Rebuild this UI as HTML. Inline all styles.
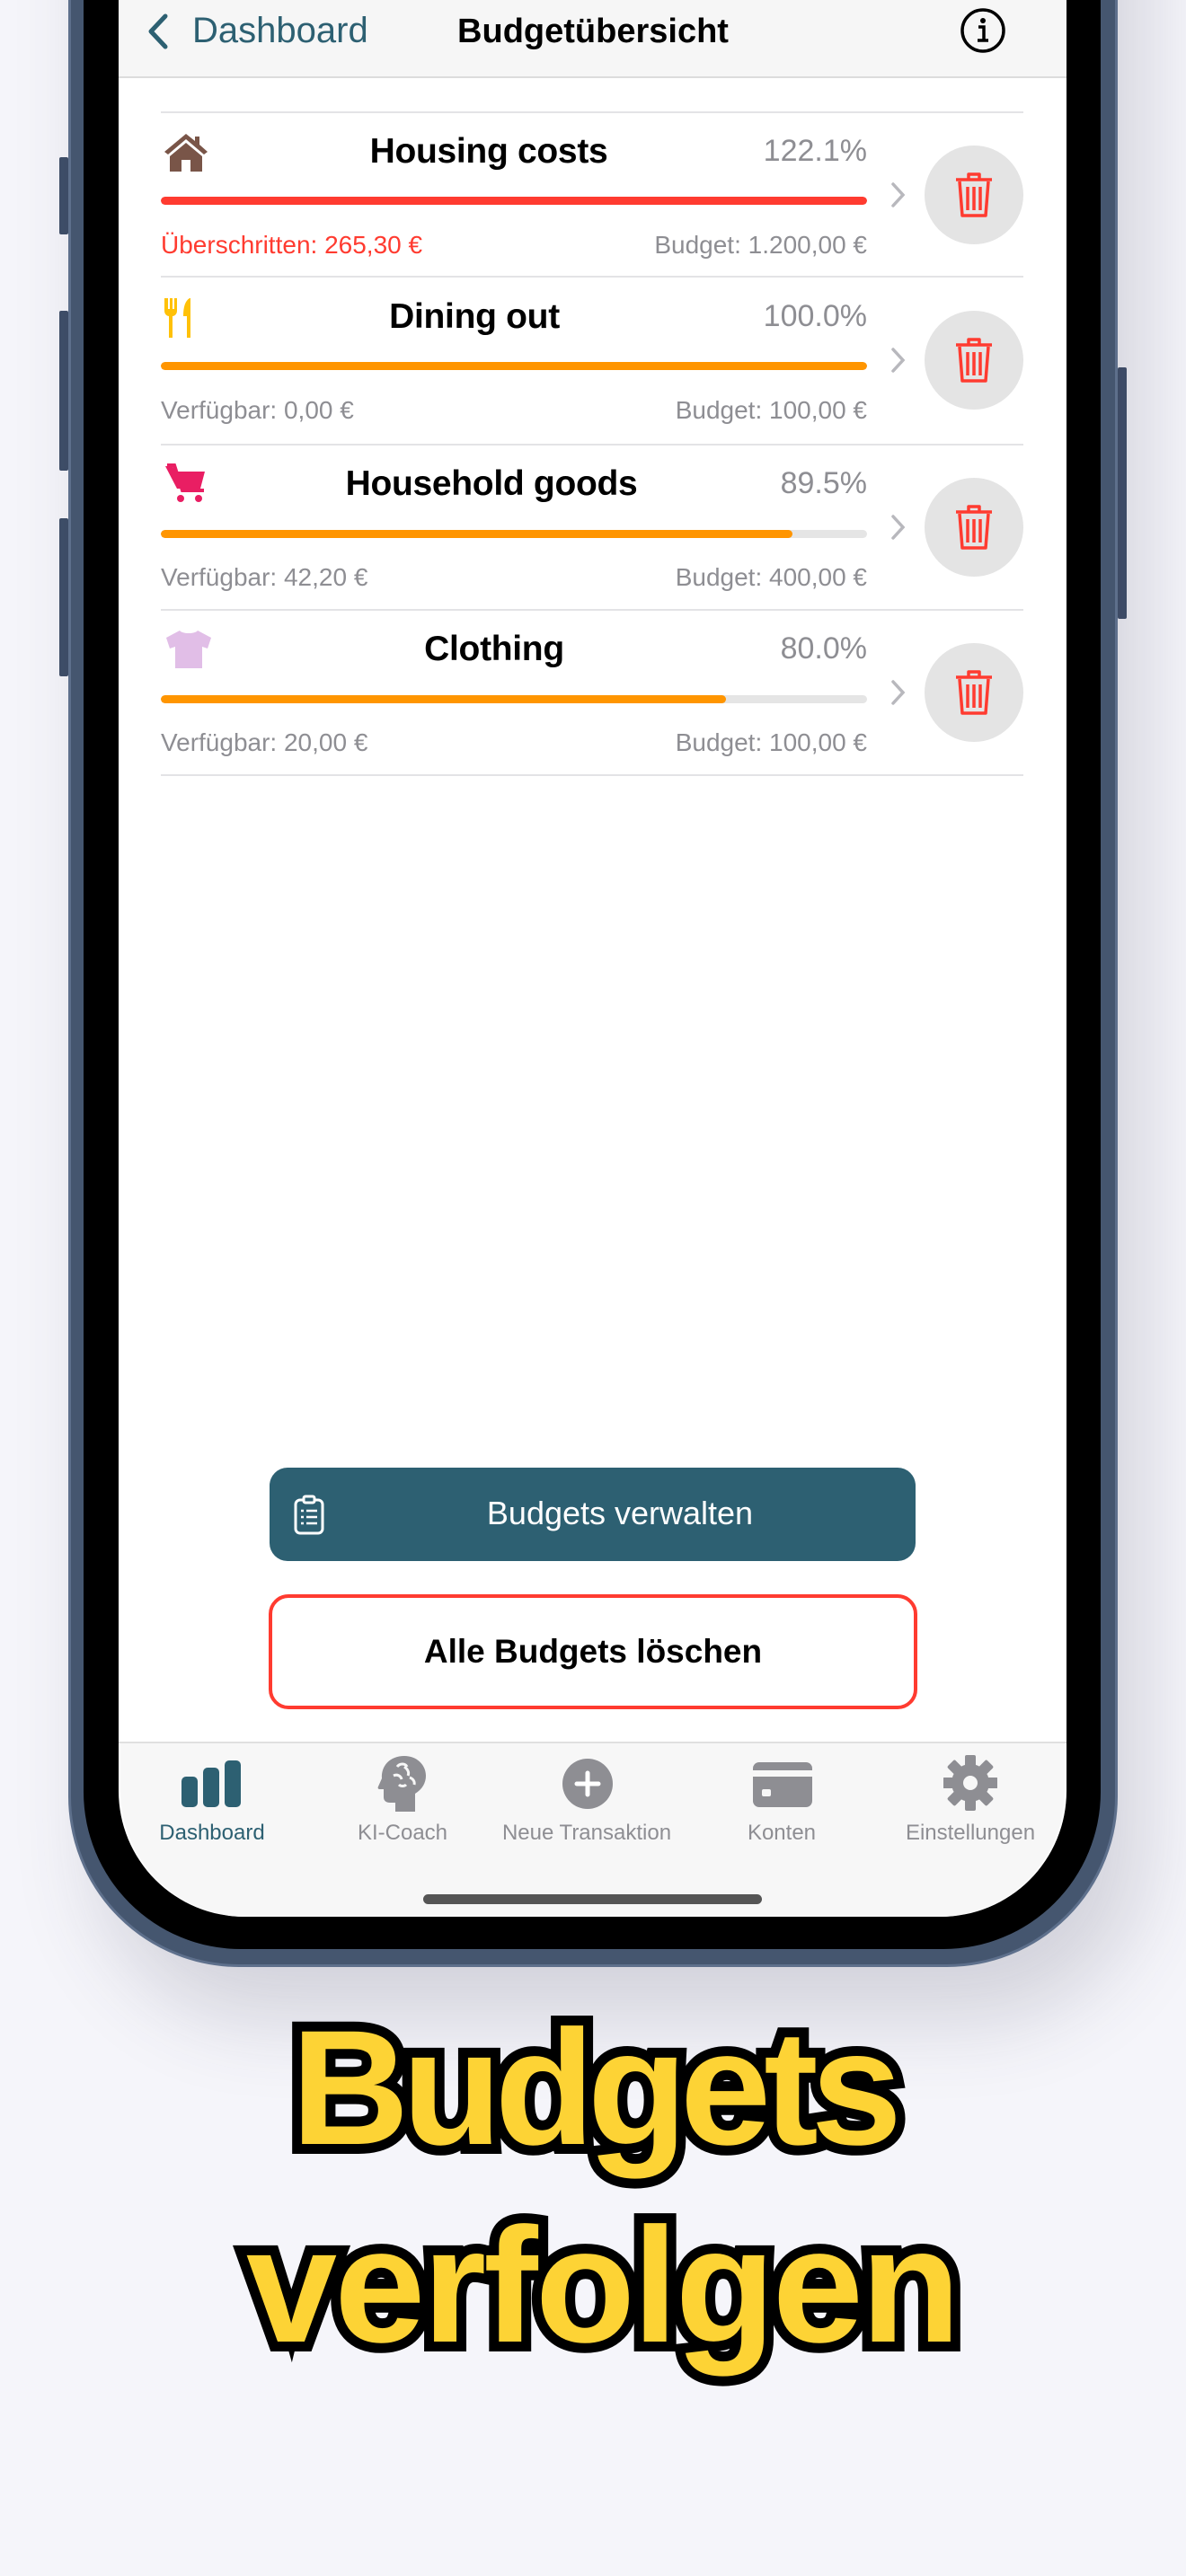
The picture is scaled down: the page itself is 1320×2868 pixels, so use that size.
<!DOCTYPE html>
<html><head><meta charset="utf-8"><style>
*{margin:0;padding:0;box-sizing:border-box}
body{width:1320px;height:2868px;position:relative;overflow:hidden;background:#f5f5fa;font-family:"Liberation Sans",sans-serif}
.abs{position:absolute}
.frame{left:76px;top:-300px;width:1168px;height:2490px;border-radius:190px;background:#45566f;box-shadow:30px 60px 90px rgba(60,60,90,0.18);border:3px solid #5e708c}
.bezel{left:93px;top:-300px;width:1132px;height:2470px;border-radius:175px;background:#000}
.screen{left:132px;top:-300px;width:1055px;height:2434px;border-radius:140px;background:#fff;overflow:hidden}
.btnside{background:#3e4e68;border-radius:2px;width:10px}
.sep{left:179px;width:960px;height:2px;background:#e3e3e6}
.title{width:600px;text-align:center;font-weight:bold;font-size:39px;color:#000;letter-spacing:-0.3px}
.pct{right:355px;font-size:34px;color:#8e8e93;text-align:right}
.bar{left:179px;width:786px;height:9px;border-radius:5px;background:#e5e5e5;overflow:hidden}
.bar div{height:100%;border-radius:5px}
.sub{font-size:28px;color:#8e8e93}
.subr{right:355px;text-align:right}
.trash{left:1029px;width:110px;height:110px;border-radius:55px;background:#e4e4e4;display:flex;align-items:center;justify-content:center}
.chev{left:990px}
.tab{width:220px;text-align:center;font-size:24px;color:#8e8e93;top:2027px}
</style></head><body>
<div class="abs btnside" style="left:66px;top:175px;height:86px"></div>
<div class="abs btnside" style="left:66px;top:346px;height:178px"></div>
<div class="abs btnside" style="left:66px;top:577px;height:176px"></div>
<div class="abs btnside" style="left:1244px;top:409px;height:280px"></div>
<div class="abs frame"></div>
<div class="abs bezel"></div>
<div class="abs screen"></div>

<!-- header -->
<div class="abs" style="left:132px;top:0;width:1055px;height:87px;background:#f6f6f6;border-bottom:2px solid #dcdcdc"></div>
<svg class="abs" style="left:160px;top:14px" width="30" height="42" viewBox="0 0 30 42"><path d="M24 4 L8 21 L24 38" fill="none" stroke="#2d6072" stroke-width="5" stroke-linecap="round" stroke-linejoin="round"/></svg>
<div class="abs" style="left:214px;top:12px;font-size:40px;color:#2d6072">Dashboard</div>
<div class="abs" style="left:460px;top:14px;width:400px;text-align:center;font-size:38px;font-weight:bold">Budgetübersicht</div>
<svg class="abs" style="left:1068px;top:8px" width="52" height="52" viewBox="0 0 52 52"><circle cx="26" cy="26" r="23" fill="none" stroke="#000" stroke-width="3.5"/><circle cx="26" cy="15" r="3" fill="#000"/><path d="M21 22h6v14M20 37h12" fill="none" stroke="#000" stroke-width="3.5"/></svg>

<!-- rows -->
<div class="abs sep" style="top:124px"></div>
<svg class="abs" style="left:181px;top:147px" width="52" height="44" viewBox="0 0 52 44"><path d="M26 2 L2 22 L6 25 L26 8 L46 25 L50 22 L41 14 V5 H36 V10 Z" fill="#795548"/><path d="M8 27 L26 12 L44 27 V44 H31 V31 H21 V44 H8Z" fill="#795548"/><rect x="21" y="31" width="10" height="13" fill="#fff"/></svg>
<div class="abs title" style="left:244px;top:147px">Housing costs</div>
<div class="abs pct" style="top:149px">122.1%</div>
<div class="abs bar" style="top:219px"><div style="width:100%;background:#ff3b30"></div></div>
<div class="abs sub" style="left:179px;top:257px;color:#ff3b30">Überschritten: 265,30 €</div>
<div class="abs sub subr" style="top:257px">Budget: 1.200,00 €</div>
<div class="abs sep" style="top:307px"></div>
<svg class="abs" style="left:181px;top:330px" width="36" height="48" viewBox="0 0 36 48"><path d="M2 2v14c0 4 3 6 5 6v24h4V22c2 0 5-2 5-6V2h-3v12h-2V2H8v12H6V2z" fill="#ffc107"/><path d="M30 2c-5 3-7 10-7 20h4v24h4V2z" fill="#ffc107"/></svg>
<div class="abs title" style="left:228px;top:331px">Dining out</div>
<div class="abs pct" style="top:333px">100.0%</div>
<div class="abs bar" style="top:403px"><div style="width:100%;background:#ff9500"></div></div>
<div class="abs sub" style="left:179px;top:441px">Verfügbar: 0,00 €</div>
<div class="abs sub subr" style="top:441px">Budget: 100,00 €</div>
<div class="abs sep" style="top:494px"></div>
<svg class="abs" style="left:182px;top:516px" width="50" height="44" viewBox="0 0 50 44"><path d="M2 3h8l3 6h33l-5 19H15z" fill="#e91e63"/><path d="M4 2h8l9 28h24" fill="none" stroke="#e91e63" stroke-width="4"/><circle cx="19" cy="39" r="4" fill="#e91e63"/><circle cx="39" cy="39" r="4" fill="#e91e63"/></svg>
<div class="abs title" style="left:247px;top:517px">Household goods</div>
<div class="abs pct" style="top:519px">89.5%</div>
<div class="abs bar" style="top:590px"><div style="width:89.5%;background:#ff9500"></div></div>
<div class="abs sub" style="left:179px;top:627px">Verfügbar: 42,20 €</div>
<div class="abs sub subr" style="top:627px">Budget: 400,00 €</div>
<div class="abs sep" style="top:678px"></div>
<svg class="abs" style="left:183px;top:700px" width="54" height="46" viewBox="0 0 54 46"><path d="M17 2 C20 6 34 6 37 2 L52 10 L48 22 L42 20 V44 H12 V20 L6 22 L2 10Z" fill="#e1bee7"/></svg>
<div class="abs title" style="left:250px;top:701px">Clothing</div>
<div class="abs pct" style="top:703px">80.0%</div>
<div class="abs bar" style="top:774px"><div style="width:80%;background:#ff9500"></div></div>
<div class="abs sub" style="left:179px;top:811px">Verfügbar: 20,00 €</div>
<div class="abs sub subr" style="top:811px">Budget: 100,00 €</div>
<div class="abs sep" style="top:862px"></div>

<svg class="abs chev" style="top:202px" width="20" height="30" viewBox="0 0 20 30"><path d="M4 3l11 12L4 27" fill="none" stroke="#b8b8bd" stroke-width="3.5" stroke-linecap="round"/></svg>
<svg class="abs chev" style="top:386px" width="20" height="30" viewBox="0 0 20 30"><path d="M4 3l11 12L4 27" fill="none" stroke="#b8b8bd" stroke-width="3.5" stroke-linecap="round"/></svg>
<svg class="abs chev" style="top:572px" width="20" height="30" viewBox="0 0 20 30"><path d="M4 3l11 12L4 27" fill="none" stroke="#b8b8bd" stroke-width="3.5" stroke-linecap="round"/></svg>
<svg class="abs chev" style="top:756px" width="20" height="30" viewBox="0 0 20 30"><path d="M4 3l11 12L4 27" fill="none" stroke="#b8b8bd" stroke-width="3.5" stroke-linecap="round"/></svg>
<div class="abs trash" style="top:162px"><svg width="46" height="54" viewBox="0 0 46 54"><path d="M3 10h40M17 10V4h12v6M7 12l3 38h26l3-38M16 18v26M23 18v26M30 18v26" fill="none" stroke="#ff3b30" stroke-width="3.5" stroke-linejoin="round"/></svg></div>
<div class="abs trash" style="top:346px"><svg width="46" height="54" viewBox="0 0 46 54"><path d="M3 10h40M17 10V4h12v6M7 12l3 38h26l3-38M16 18v26M23 18v26M30 18v26" fill="none" stroke="#ff3b30" stroke-width="3.5" stroke-linejoin="round"/></svg></div>
<div class="abs trash" style="top:532px"><svg width="46" height="54" viewBox="0 0 46 54"><path d="M3 10h40M17 10V4h12v6M7 12l3 38h26l3-38M16 18v26M23 18v26M30 18v26" fill="none" stroke="#ff3b30" stroke-width="3.5" stroke-linejoin="round"/></svg></div>
<div class="abs trash" style="top:716px"><svg width="46" height="54" viewBox="0 0 46 54"><path d="M3 10h40M17 10V4h12v6M7 12l3 38h26l3-38M16 18v26M23 18v26M30 18v26" fill="none" stroke="#ff3b30" stroke-width="3.5" stroke-linejoin="round"/></svg></div>

<!-- buttons -->
<div class="abs" style="left:300px;top:1634px;width:719px;height:104px;border-radius:20px;background:#2d6072"></div>
<svg class="abs" style="left:326px;top:1664px" width="36" height="46" viewBox="0 0 36 46"><rect x="3" y="6" width="30" height="37" rx="5" fill="none" stroke="#fff" stroke-width="3"/><rect x="12" y="2" width="12" height="7" rx="2" fill="#2d6072" stroke="#fff" stroke-width="3"/><path d="M9 18h3M9 25h3M9 32h3M15 18h12M15 25h12M15 32h12" stroke="#fff" stroke-width="2.5"/></svg>
<div class="abs" style="left:300px;top:1664px;width:780px;text-align:center;font-size:36px;color:#fff">Budgets verwalten</div>
<div class="abs" style="left:299px;top:1775px;width:722px;height:128px;border-radius:22px;border:4px solid #ff3b30;background:#fff"></div>
<div class="abs" style="left:299px;top:1818px;width:722px;text-align:center;font-size:37px;font-weight:bold;color:#000">Alle Budgets löschen</div>

<!-- tab bar -->
<div class="abs" style="left:132px;top:1939px;width:1055px;height:2px;background:#e0e0e0"></div>
<div class="abs" style="left:134px;top:1941px;width:1051px;height:193px;background:#f7f7f7;border-radius:0 0 140px 140px"></div>
<svg class="abs" style="left:200px;top:1958px" width="72" height="56" viewBox="0 0 72 56"><rect x="2" y="20" width="18" height="34" rx="5" fill="#2d6072"/><rect x="26" y="10" width="18" height="44" rx="5" fill="#2d6072"/><rect x="50" y="2" width="18" height="52" rx="5" fill="#2d6072"/></svg>
<svg class="abs" style="left:420px;top:1953px" width="56" height="66" viewBox="0 0 56 66"><path d="M30 2C14 2 4 13 5 27L1 36c-1 2 0 3 2 3h4v9c0 4 3 6 7 6h6v10h22V44c8-5 12-12 12-20C54 12 44 2 30 2z" fill="#8e8e93"/><path d="M22 14c3-4 9-4 11 0M30 14c3 2 6 6 4 10M18 24c4-2 8 0 9 4M36 26c3 1 6 4 5 8M24 34c2 2 6 2 8 0" fill="none" stroke="#f7f7f7" stroke-width="3"/></svg>
<svg class="abs" style="left:626px;top:1958px" width="56" height="56" viewBox="0 0 56 56"><circle cx="28" cy="28" r="28" fill="#8e8e93"/><path d="M28 16v24M16 28h24" stroke="#fff" stroke-width="5" stroke-linecap="round"/></svg>
<svg class="abs" style="left:838px;top:1962px" width="66" height="50" viewBox="0 0 66 50"><rect x="0" y="0" width="66" height="50" rx="7" fill="#8e8e93"/><rect x="0" y="9" width="66" height="7" fill="#f7f7f7"/><rect x="10" y="30" width="10" height="8" rx="2" fill="#f7f7f7"/></svg>
<svg class="abs" style="left:1050px;top:1953px" width="60" height="64" viewBox="0 0 60 64"><g fill="#8e8e93" transform="translate(30 32)"><circle r="21"/><g id="t"><rect x="-6" y="-31" width="12" height="14" rx="2"/></g><use href="#t" transform="rotate(45)"/><use href="#t" transform="rotate(90)"/><use href="#t" transform="rotate(135)"/><use href="#t" transform="rotate(180)"/><use href="#t" transform="rotate(225)"/><use href="#t" transform="rotate(270)"/><use href="#t" transform="rotate(315)"/><circle r="8" fill="#f7f7f7"/></g></svg>
<div class="abs tab" style="left:126px;color:#2d6072">Dashboard</div>
<div class="abs tab" style="left:338px">KI-Coach</div>
<div class="abs tab" style="left:543px">Neue Transaktion</div>
<div class="abs tab" style="left:760px">Konten</div>
<div class="abs tab" style="left:970px">Einstellungen</div>
<div class="abs" style="left:471px;top:2109px;width:377px;height:11px;border-radius:6px;background:#555"></div>

<!-- headline -->
<div class="abs" style="left:0;top:2224px;width:1320px;text-align:center;font-size:182px;font-weight:bold;color:#fdd335;-webkit-text-stroke:22px #000;paint-order:stroke fill;letter-spacing:-8px;line-height:200px">Budgets</div>
<div class="abs" style="left:10px;top:2444px;width:1320px;text-align:center;font-size:182px;font-weight:bold;color:#fdd335;-webkit-text-stroke:22px #000;paint-order:stroke fill;letter-spacing:-3px;line-height:200px">verfolgen</div>
</body></html>
